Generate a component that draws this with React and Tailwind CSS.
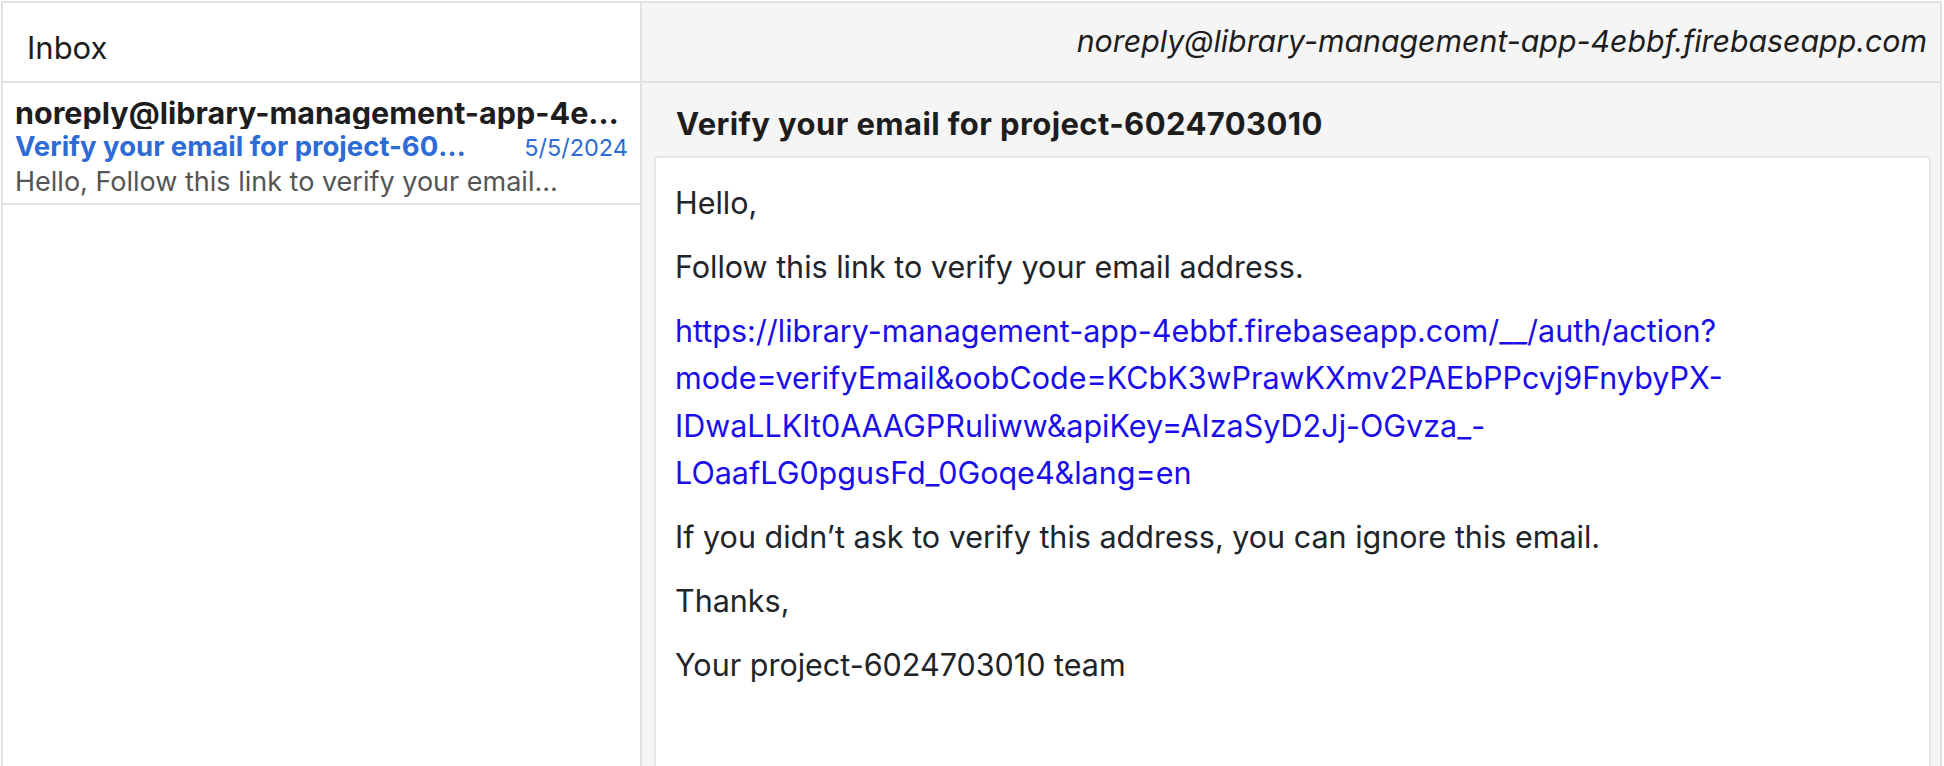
import React from 'react';

const font = { fontFamily: 'Inter, "Noto Sans", sans-serif' };

const message = {
    from: 'noreply@library-management-app-4ebbf.firebaseapp.com',
    subject: 'Verify your email for project-6024703010',
    date: '5/5/2024',
    // snippet is cut to the first few words, like the list does
    preview: 'Hello, Follow this link to verify your email...',
};

const linkLines = [
    'https://library-management-app-4ebbf.firebaseapp.com/__/auth/action?',
    'mode=verifyEmail&oobCode=KCbK3wPrawKXmv2PAEbPPcvj9FnybyPX-',
    'IDwaLLKIt0AAAGPRuliww&apiKey=AIzaSyD2Jj-OGvza_-',
    'LOaafLG0pgusFd_0Goqe4&lang=en',
];

function InboxList() {
    return (
        <div className="flex w-[639px] shrink-0 flex-col border-r-2 border-[#e2e2e2] bg-white">
            <div className="h-[80px] shrink-0 border-b-2 border-[#e2e2e2] pl-[24px] pt-[26px] text-[31px] leading-[38px] text-[#1d1d1d]">
                Inbox
            </div>
            <div className="flex h-[122px] shrink-0 flex-col border-b-2 border-[#e2e2e2] pl-[12px] pr-[12px] pt-[14px]">
                <div className="truncate text-[30.5px] font-bold leading-[32px] text-[#1d1d1d]">{message.from}</div>
                <div className="flex items-baseline">
                    <div className="min-w-0 flex-1 truncate text-[27.5px] font-bold leading-[34px] text-[#2d6bd6]">
                        {message.subject}
                    </div>
                    <div className="shrink-0 pl-[52px] text-[23.5px] leading-[34px] text-[#2d6bd6]">{message.date}</div>
                </div>
                <div className="truncate text-[27px] leading-[34px] text-[#555555]">{message.preview}</div>
            </div>
        </div>
    );
}

function MessageView() {
    return (
        <div className="flex min-w-0 flex-1 flex-col bg-[#f5f5f5]">
            <div className="flex h-[80px] shrink-0 justify-end border-b-2 border-[#e2e2e2] pr-[13px] pt-[19px] text-[30.3px] italic leading-[38px] text-[#1d1d1d]">
                {message.from}
            </div>
            <div className="flex flex-1 flex-col pl-[12px] pr-[9px]">
                <h2 className="pl-[22px] pt-[23px] pb-[14px] text-[31px] font-bold leading-[36px] tracking-[0.4px] text-[#1d1d1d]">
                    {message.subject}
                </h2>
                <div className="flex-1 rounded-t-[4px] border-2 border-b-0 border-[#e6e6e6] bg-white px-[19px] pt-[21px] text-[30.5px] leading-[47.3px] text-[#212529]">
                    <p className="mb-[16.7px]">Hello,</p>
                    <p className="mb-[16.7px]">Follow this link to verify your email address.</p>
                    <p className="mb-[16.7px]">
                        <a className="text-[#1a0dea] no-underline">
                            {linkLines.map((line, i) => (
                                <React.Fragment key={i}>
                                    {line}
                                    {i < linkLines.length - 1 && <br />}
                                </React.Fragment>
                            ))}
                        </a>
                    </p>
                    <p className="mb-[16.7px]">If you didn’t ask to verify this address, you can ignore this email.</p>
                    <p className="mb-[16.7px]">Thanks,</p>
                    <p className="mb-[16.7px]">Your project-6024703010 team</p>
                </div>
            </div>
        </div>
    );
}

export default function App() {
    return (
        <div className="h-[766px] w-[1944px] overflow-hidden bg-white pl-px pt-px" style={font}>
            <div className="flex h-[765px] w-[1941px] border-x-2 border-t-2 border-[#e2e2e2]">
                <InboxList />
                <MessageView />
            </div>
        </div>
    );
}
